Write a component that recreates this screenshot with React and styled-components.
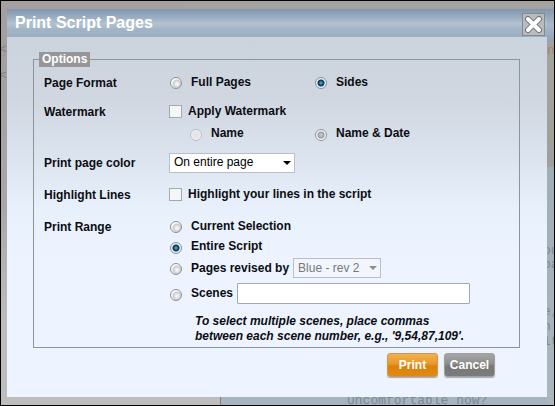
import React, { useState } from "react";
import styled, { createGlobalStyle } from "styled-components";

const GlobalStyle = createGlobalStyle`
  * { box-sizing: border-box; }
  body {
    margin: 0;
    font: bold 12px/15px "Liberation Sans", Arial, sans-serif;
    color: #0b0d12;
  }
`;

const Screen = styled.main`
  position: relative;
  min-height: 100vh;
  border: 1px solid #000;
  padding: 8px 7px 8px 6px;
  overflow: hidden;
  background: #b9b9ba;
`;

const Backdrop = styled.div`
  position: absolute;
  inset: 0;
  background:
    linear-gradient(#a5a39f, #a5a39f) top right / 370px 7px no-repeat,
    linear-gradient(#8397ac, #a9b9c9 50%, #8fa3b7) right 8px / 7px 32px no-repeat,
    linear-gradient(#a5a29d, #9fa09b) right 40px / 7px 126px no-repeat,
    linear-gradient(#9eaeb5, #a9b7be) right 166px / 7px 240px no-repeat,
    linear-gradient(#a6b4bf, #a6b4bf) right bottom / calc(100% - 220px) 9px no-repeat,
    linear-gradient(#a5a09f, #a29f9e 12%, #aaa6a8 50%, #bdbdbd 80%);
`;

const ScriptText = styled.span`
  position: absolute;
  left: ${(p) => p.$x}px;
  top: ${(p) => p.$y}px;
  font: 13px/15px "Liberation Mono", monospace;
  color: ${(p) => p.$color || "#7d8992"};
  white-space: pre;
`;

const PageEdge = styled.span`
  position: absolute;
  left: 219px;
  bottom: 0;
  width: 1px;
  height: 8px;
  background: #7b8186;
`;

const Dialog = styled.form`
  position: relative;
  background: linear-gradient(#cbd3dd 28px, #d0d7e1 90px, #dce4ef 150px, #e8f0fb 200px, #edf4ff 250px);
`;

const Header = styled.header`
  display: flex;
  align-items: center;
  justify-content: space-between;
  height: 28px;
  padding: 0 2px 0 8px;
  background: linear-gradient(#8196ae, #95a9be 25%, #b3c2d0 52%, #a2b5c7 72%, #9aaec3);
`;

const Title = styled.h1`
  margin: 0;
  font-size: 16px;
  line-height: 18px;
  color: #fff;
`;

const CloseButton = styled.button`
  display: flex;
  width: 23px;
  height: 23px;
  padding: 0;
  margin-top: 2px;
  border: 1px solid #83898f;
  background: #b9bcbf;
`;

const Body = styled.div`
  padding: 15px 27px 20px 26px;
`;

const Options = styled.fieldset`
  min-width: 0;
  margin: 0;
  padding: 0 10px 3px;
  border: 1px solid #8c949e;
`;

const Legend = styled.legend`
  margin-left: -5px;
  padding: 0 3px;
  background: #969699;
  color: #fff;
`;

const Row = styled.div`
  display: grid;
  grid-template-columns: 125px 1fr;
  align-items: center;
  min-height: ${(p) => p.$height}px;
`;

const RangeRow = styled(Row)`
  align-items: start;
  padding-top: 12px;
`;

const RowLabel = styled.span`
  padding-top: ${(p) => (p.$top ? 4 : 2)}px;
`;

const Pair = styled.div`
  display: grid;
  grid-template-columns: ${(p) => (p.$indent ? 125 : 145)}px 1fr;
  margin-left: ${(p) => (p.$indent ? 20 : 0)}px;
`;

const Choice = styled.label`
  display: flex;
  align-items: center;
  gap: ${(p) => (p.$box ? 6 : 8)}px;
  white-space: nowrap;
`;

const Radio = styled.input.attrs({ type: "radio" })`
  appearance: none;
  flex: none;
  width: 12px;
  height: 12px;
  margin: 2px 1px 0;
  border: 1px solid #8d9298;
  border-radius: 50%;
  background: radial-gradient(circle at 60% 60%, #f4f4f4 10%, #c9ccd0 45%, #fafafa 60%);

  &:checked {
    border-color: #7f93a4;
    background: radial-gradient(circle at 50% 50%, #6cb9d3 0, #17536e 2px, #0d364b 3px, #e9f1f6 4px);
  }
  &:disabled {
    border-color: #b9bdc2;
    background: radial-gradient(circle, #e4e5e7 40%, #f3f4f5 75%);
  }
  &:disabled:checked {
    border-color: #92969c;
    background: radial-gradient(circle, #c4c5c8 1px, #96989c 3px, #f2f3f4 4px);
  }
`;

const Checkbox = styled.input.attrs({ type: "checkbox" })`
  appearance: none;
  flex: none;
  width: 13px;
  height: 13px;
  margin: 0;
  border: 1px solid #a6aab0;
  background: #f5f6f8;

  &:checked { background: #17536e; box-shadow: inset 0 0 0 2px #f5f6f8; }
`;

const SelectBox = styled.span`
  position: relative;
  display: flex;
  justify-self: start;
  color: ${(p) => (p.$disabled ? "#8c8e91" : "#000")};

  svg { position: absolute; right: 4px; top: 8px; pointer-events: none; }
`;

const Select = styled.select`
  appearance: none;
  width: ${(p) => p.$width}px;
  height: 20px;
  padding: 0 16px 0 4px;
  border: 1px solid #b8bfc8;
  border-radius: 0;
  background: #fff;
  color: #000;
  font: 12px/15px "Liberation Sans", Arial, sans-serif;

  &:disabled { background: #f2f6fc; color: #76797c; opacity: 1; }
`;

const RangeList = styled.div`
  display: grid;
  grid-template-rows: 20px 21px 22px 21px;
`;

const RangeLine = styled.div`
  display: flex;
  align-items: center;
  gap: 4px;
  margin-top: ${(p) => p.$drop || 0}px;
`;

const SceneInput = styled.input`
  flex: 0 1 233px;
  min-width: 0;
  height: 21px;
  padding: 0 4px;
  border: 1px solid #a3a8af;
  border-radius: 1px;
  background: #fff;
  font: 12px/15px "Liberation Sans", Arial, sans-serif;
`;

const Hint = styled.p`
  max-width: 280px;
  margin: 14px 0 0 26px;
  font-style: italic;
`;

const Actions = styled.div`
  display: flex;
  justify-content: flex-end;
  gap: 6px;
  padding: 5px 25px 0 0;
`;

const Button = styled.button`
  width: 51px;
  height: 24px;
  padding: 0;
  border: 1px solid ${(p) => (p.$primary ? "#c89a55" : "#a0a0a0")};
  border-radius: 3px;
  background: ${(p) => (p.$primary
    ? "linear-gradient(#f2b04d, #e9982a 45%, #dd8106 55%, #df8a16)"
    : "linear-gradient(#a5a5a5, #8e8e8e 45%, #787878 55%, #7b7b7b)")};
  box-shadow: 0 1px 1px #a9adb3;
  color: #fff;
  font: bold 12px/15px "Liberation Sans", Arial, sans-serif;
`;

function DropDown({ width, disabled, label, options }) {
  return (
    <SelectBox $disabled={disabled}>
      <Select $width={width} disabled={disabled} aria-label={label}>
        {options.map((o) => <option key={o}>{o}</option>)}
      </Select>
      <svg width="8" height="4" aria-hidden="true"><path d="M0 0h8L4 4z" fill="currentColor" /></svg>
    </SelectBox>
  );
}

export default function App() {
  const [format, setFormat] = useState("sides");
  const [watermark, setWatermark] = useState(false);
  const [stamp, setStamp] = useState("date");
  const [range, setRange] = useState("entire");
  const rangeRadio = (value) => (
    <Radio name="range" checked={range === value} onChange={() => setRange(value)} />
  );

  return (
    <>
      <GlobalStyle />
      <Screen>
        <Backdrop aria-hidden="true">
          <ScriptText $x={546} $y={42} $color="#a18470">n</ScriptText>
          <ScriptText $x={-2} $y={41} $color="#8b8078">&lt;</ScriptText>
          <ScriptText $x={-2} $y={67} $color="#8b8078">&lt;</ScriptText>
          <ScriptText $x={542} $y={242}>ou</ScriptText>
          <ScriptText $x={542} $y={256}>pa</ScriptText>
          <ScriptText $x={542} $y={303}>e,</ScriptText>
          <ScriptText $x={542} $y={318}>n</ScriptText>
          <ScriptText $x={542} $y={333}>it</ScriptText>
          <ScriptText $x={346} $y={392}>Uncomfortable now?</ScriptText>
          <PageEdge />
        </Backdrop>
        <Dialog onSubmit={(e) => e.preventDefault()}>
          <Header>
            <Title>Print Script Pages</Title>
            <CloseButton type="button" aria-label="Close">
              <svg width="21" height="21" viewBox="0 0 21 21">
                <path d="M5 5L16 16M16 5L5 16" stroke="#6f7173" strokeWidth="6" strokeLinecap="round" />
                <path d="M5 5L16 16M16 5L5 16" stroke="#fff" strokeWidth="4" strokeLinecap="round" />
              </svg>
            </CloseButton>
          </Header>
          <Body>
            <Options>
              <Legend>Options</Legend>
              <Row $height={30}>
                <RowLabel>Page Format</RowLabel>
                <Pair>
                  <Choice><Radio name="format" checked={format === "full"} onChange={() => setFormat("full")} />Full Pages</Choice>
                  <Choice><Radio name="format" checked={format === "sides"} onChange={() => setFormat("sides")} />Sides</Choice>
                </Pair>
              </Row>
              <Row $height={29}>
                <RowLabel>Watermark</RowLabel>
                <Choice $box>
                  <Checkbox checked={watermark} onChange={() => setWatermark(!watermark)} />Apply Watermark
                </Choice>
              </Row>
              <Row $height={15}>
                <span />
                <Pair $indent>
                  <Choice><Radio name="stamp" disabled={!watermark} checked={stamp === "name"} onChange={() => setStamp("name")} />Name</Choice>
                  <Choice><Radio name="stamp" disabled={!watermark} checked={stamp === "date"} onChange={() => setStamp("date")} />Name &amp; Date</Choice>
                </Pair>
              </Row>
              <Row $height={43}>
                <RowLabel>Print page color</RowLabel>
                <DropDown width={126} label="Print page color" options={["On entire page", "None"]} />
              </Row>
              <Row $height={20}>
                <RowLabel>Highlight Lines</RowLabel>
                <Choice $box><Checkbox />Highlight your lines in the script</Choice>
              </Row>
              <RangeRow>
                <RowLabel $top>Print Range</RowLabel>
                <RangeList>
                  <Choice>{rangeRadio("current")}Current Selection</Choice>
                  <Choice>{rangeRadio("entire")}Entire Script</Choice>
                  <RangeLine>
                    <Choice>{rangeRadio("revised")}Pages revised by</Choice>
                    <DropDown width={88} disabled={range !== "revised"} label="Revision" options={["Blue - rev 2"]} />
                  </RangeLine>
                  <RangeLine $drop={8}>
                    <Choice>{rangeRadio("scenes")}Scenes</Choice>
                    <SceneInput type="text" aria-label="Scene numbers" />
                  </RangeLine>
                  <Hint>To select multiple scenes, place commas between each scene number, e.g., '9,54,87,109'.</Hint>
                </RangeList>
              </RangeRow>
            </Options>
            <Actions>
              <Button type="submit" $primary>Print</Button>
              <Button type="button">Cancel</Button>
            </Actions>
          </Body>
        </Dialog>
      </Screen>
    </>
  );
}
